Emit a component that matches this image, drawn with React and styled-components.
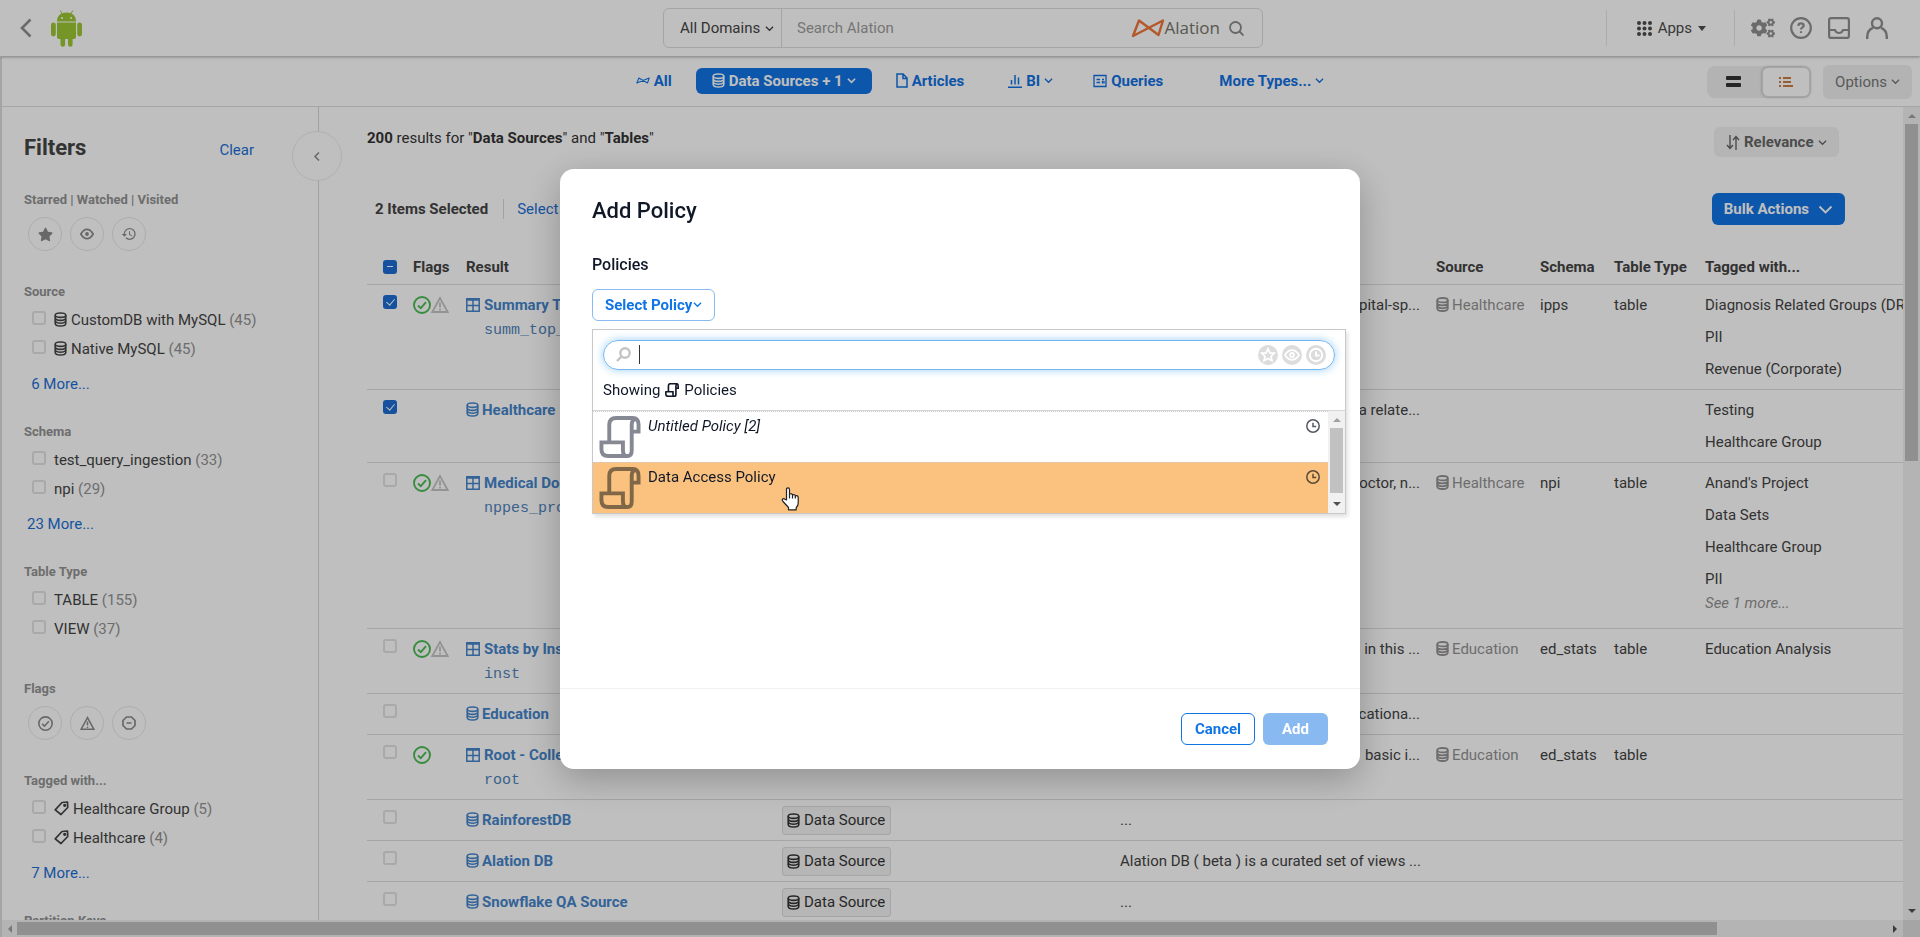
import React from 'react';
import styled, { createGlobalStyle, css } from 'styled-components';
import { FaCogs, FaStar } from 'react-icons/fa';
import { MdHistory } from 'react-icons/md';

const GlobalStyle = createGlobalStyle`
  * { box-sizing: border-box; }
  body {
    margin: 0;
    background: #fff;
    color: #444;
    font-family: Roboto, "Liberation Sans", sans-serif;
    font-size: 15px;
    line-height: 24px;
  }
  button, input, select { font: inherit; color: inherit; }
  button { cursor: pointer; padding: 0; border: 0; background: none; }
  a { text-decoration: none; }
  svg { display: block; flex: none; }
`;

/* ---------- icons ---------- */

const Icon = ({ w = 16, h = w, box, sw = 2, children, ...rest }) => (
  <svg width={w} height={h} viewBox={box || `0 0 ${w} ${h}`} fill="none" stroke="currentColor" strokeWidth={sw} aria-hidden="true" {...rest}>
    {children}
  </svg>
);

const ChevronDown = ({ size = 9, sw = 1.4 }) => (
  <Icon w={size} box="0 0 10 10" sw={sw}><path d="M1 3l4 4 4-4" /></Icon>
);

const DatabaseIcon = ({ sw = 1.6 }) => (
  <Icon w={13} h={15} sw={sw}>
    <ellipse cx="6.500" cy="3.200" rx="5.300" ry="2.200" />
    <path d="M1.200 3.200v8c0 1.600 2.200 2.800 5.300 2.800s5.300-1.200 5.300-2.800v-8M1.200 5.800c0 1.600 2.200 2.600 5.300 2.600s5.300-1 5.300-2.600M1.800 9.800c.8 1 2.500 1.500 4.700 1.500s3.900-.5 4.700-1.500" />
  </Icon>
);

const TableIcon = () => (
  <Icon w={14} sw={1.500}><path d="M.8.8h12.400v12.400H.8zM.8 2h12.400M.8 7.500h12.400M7 2v11" /></Icon>
);

const ScrollIcon = ({ size = 14 }) => (
  <Icon w={size} box="0 0 42 43" sw={size > 20 ? 4 : 5}>
    <path d="M10 27V9q0-7 7-7h17q6 0 6 7v7h-7M33 35V9q0-5 4-6M2 27h22v8q0 6 4.500 6t4.500-6M2 25v9q0 7 7 7h19" />
  </Icon>
);

const CheckCircle = ({ size = 18, sw = 1.9 }) => (
  <Icon w={size} box="0 0 18 18" sw={sw}><circle cx="9" cy="9" r="8" /><path d="M5 9.500l2.800 2.700L13 6.200" /></Icon>
);

const Warning = ({ size = 18, sw = 1.8 }) => (
  <Icon w={size} box="0 0 18 18" sw={sw}><path d="M9 2L1.300 16h15.400zM9 6.500v5M9 12.800v1.600" /></Icon>
);

const NoEntry = () => (
  <Icon w={14} sw={1.7}><path d="M4.500 1h5L13 4.500v5L9.500 13h-5L1 9.500v-5zM4.500 7h5" /></Icon>
);

const TagIcon = () => (
  <Icon w={15} sw={1.700}><path d="M8 1.500L13.500 1l.2 5.500L7 13.500 1.200 8.800z" strokeLinejoin="round" /><circle cx="10.700" cy="4.300" r=".8" fill="currentColor" /></Icon>
);

const EyeIcon = () => (
  <Icon w={14} sw={1.700}><path d="M.8 7Q3.500 2.300 7 2.300T13.200 7Q10.500 11.700 7 11.700T.8 7z" /><circle cx="7" cy="7" r="1.900" fill="currentColor" stroke="none" /></Icon>
);

const ClockIcon = () => (
  <Icon w={14} sw={1.500}><circle cx="7" cy="7" r="6.200" /><path d="M7 3.800V7.500h3.200" /></Icon>
);

const BowIcon = () => (
  <Icon w={14} h={9} box="0 0 34 20" sw={2.500}><path d="M7 4L2 16 32 4l-4 12z" strokeLinejoin="round" /></Icon>
);

const AndroidLogo = () => (
  <svg width="31" height="37" viewBox="0 0 31 37" fill="#9cc734" aria-hidden="true">
    <path d="M6 11.500C6 5.500 10 2.500 15.500 2.500S25 5.500 25 11.500z" />
    <path d="M9.200.5l2.300 4M21.800.5l-2.300 4" stroke="#9cc734" strokeWidth="1" />
    <circle cx="11" cy="8" r="1" fill="#fff" /><circle cx="20" cy="8" r="1" fill="#fff" />
    <path d="M6 12.500h19V27q0 2-2 2H8q-2 0-2-2z" />
    <rect x="0" y="12.500" width="4.800" height="14" rx="2.400" />
    <rect x="26.200" y="12.500" width="4.800" height="14" rx="2.400" />
    <path d="M9.500 28h4.600v6.500a2.300 2.300 0 0 1-4.600 0zM17 28h4.600v6.500a2.300 2.300 0 0 1-4.600 0z" />
  </svg>
);

const Triangle = ({ d, color = '#505050' }) => (
  <svg width="8" height="8" viewBox="0 0 8 8" fill={color} aria-hidden="true"><path d={d} /></svg>
);
const UP = 'M4 2l4 4H0z';
const DOWN = 'M0 2h8L4 6z';
const LEFT = 'M2 4l4-4v8z';
const RIGHT = 'M6 4L2 0v8z';

/* ---------- page frame ---------- */

const Page = styled.div`
  height: 100vh;
  display: flex;
  flex-direction: column;
  overflow: hidden;
`;

const Header = styled.header`
  position: relative;
  z-index: 1;
  flex: none;
  height: 56px;
  display: grid;
  grid-template-columns: 1fr 600px 1fr;
  align-items: center;
  padding: 0 14px 0 20px;
  margin-bottom: 1px;
  box-shadow: 0 1px 3px rgba(0, 0, 0, 0.35);
`;

const Brand = styled.div`
  display: flex;
  align-items: center;
  gap: 19px;
  color: #8f8f8f;
`;

const SearchBar = styled.div`
  display: flex;
  align-items: center;
  height: 40px;
  padding-right: 18px;
  border: 1px solid #dcdcdc;
  border-radius: 6px;
`;

const DomainPicker = styled.label`
  display: flex;
  align-items: center;
  gap: 4px;
  height: 100%;
  padding: 0 7px 0 16px;
  border-right: 1px solid #dcdcdc;
`;

const PlainSelect = styled.select`
  appearance: none;
  border: 0;
  padding: 0;
  background: none;
  font-weight: inherit;
`;

const SearchInput = styled.input`
  flex: 1;
  min-width: 0;
  border: 0;
  outline: 0;
  padding: 0 15px;
  background: none;
  &::placeholder { color: #9d9d9d; }
`;

const Wordmark = styled.span`
  margin: 0 9px 0 0;
  color: #77756a;
  font-family: "Open Sans", sans-serif;
  font-size: 17px;
`;

const Tools = styled.div`
  display: flex;
  justify-content: flex-end;
  align-items: center;
  height: 36px;
  padding-right: 17px;
  color: #8f8f8f;
`;

const AppsButton = styled.button`
  display: flex;
  align-items: center;
  gap: 6px;
  height: 36px;
  padding: 0 28px 0 30px;
  margin-right: 16px;
  border: solid #e6e6e6;
  border-width: 0 1px;
  color: #4c4c4c;
`;

const ToolButton = styled.button`
  display: flex;
  justify-content: center;
  width: 24px;
  margin-right: 14px;
  &:last-child { margin-right: 0; }
`;

const NavBar = styled.nav`
  flex: none;
  height: 50px;
  display: grid;
  grid-template-columns: 1fr auto 1fr;
  align-items: center;
  padding: 0 8px;
  border-bottom: 1px solid #dedede;
  border-left: 2px solid #dcdcdc;
`;

const Tabs = styled.div`
  grid-column: 2;
  display: flex;
  align-items: center;
  padding: 0 0 2px 38px;
`;

const Tab = styled.a`
  display: flex;
  align-items: center;
  gap: 4px;
  height: 26px;
  margin-right: ${(p) => p.$gap || 24}px;
  color: #1171e2;
  font-weight: 700;
  &:last-child { margin-right: 0; }
  ${(p) => p.$active && css`
    padding: 0 16px;
    border-radius: 6px;
    background: #1075e4;
    color: #fff;
  `}
`;

const NavTools = styled.div`
  grid-column: 3;
  display: flex;
  justify-content: flex-end;
  align-items: center;
  gap: 12px;
`;

const Toggle = styled.div`
  display: flex;
  align-items: center;
  padding: 1px;
  border-radius: 8px;
  background: #efefef;
`;

const ToggleButton = styled.button`
  display: flex;
  align-items: center;
  justify-content: center;
  width: ${(p) => (p.$active ? 48 : 54)}px;
  height: 30px;
  padding-right: ${(p) => (p.$active ? 0 : 4)}px;
  color: ${(p) => (p.$active ? '#cf7d40' : '#333')};
  ${(p) => p.$active && css`
    border: 1px solid #ddd;
    border-radius: 6px;
    background: #fff;
    box-shadow: 0 0 3px rgba(0, 0, 0, 0.3);
  `}
`;

const SoftButton = styled.button`
  display: flex;
  align-items: center;
  gap: 4px;
  height: 34px;
  padding: 0 12px;
  border-radius: 6px;
  background: #efefef;
  color: #777;
`;

const Body = styled.div`
  flex: 1;
  min-height: 0;
  display: flex;
  border-left: 2px solid #dcdcdc;
`;

/* ---------- filter column ---------- */

const SidebarWrap = styled.aside`
  position: relative;
  flex: none;
  width: 317px;
  border-right: 1px solid #d6d6d6;
`;

const Sidebar = styled.div`
  height: 100%;
  padding-left: 22px;
  overflow: hidden;
`;

const CollapseButton = styled.button`
  position: absolute;
  z-index: 1;
  top: 24px;
  right: -24px;
  width: 50px;
  height: 50px;
  display: flex;
  align-items: center;
  justify-content: center;
  border: 1px solid #ebebeb;
  border-radius: 50%;
  background: #fff;
  color: #888;
`;

const FilterHead = styled.div`
  display: flex;
  align-items: baseline;
  justify-content: space-between;
  height: 81px;
  padding: 29px 64px 0 0;
`;

const FilterTitle = styled.h2`
  margin: 0;
  font-size: 22px;
  font-weight: 700;
`;

const TextLink = styled.a`
  color: #1c6fd6;
`;

const FilterGroup = styled.section`
  margin-bottom: ${(p) => p.$gap || 24}px;
`;

const GroupLabel = styled.h3`
  margin: 0 0 1px;
  font-size: 13px;
  line-height: 24px;
  font-weight: 700;
  color: #929292;
`;

const RoundRow = styled.div`
  display: flex;
  gap: 8px;
  padding: 4px 0 0 4px;
`;

const RoundButton = styled.button`
  display: flex;
  align-items: center;
  justify-content: center;
  width: 34px;
  height: 34px;
  border: 1px solid #e8e8e8;
  border-radius: 50%;
  color: #8b8b8b;
`;

const FilterItem = styled.label`
  display: flex;
  align-items: center;
  gap: 4px;
  height: 29px;
  padding-left: 8px;
`;

const Count = styled.span`
  color: #929292;
`;

const MoreLink = styled.a`
  display: block;
  width: 73px;
  margin-top: 9px;
  text-align: center;
  color: #1c6fd6;
`;

const Check = styled.input.attrs({ type: 'checkbox' })`
  appearance: none;
  display: block;
  flex: none;
  position: relative;
  width: 14px;
  height: 14px;
  margin: 0 4px 4px 0;
  border: 2px solid #e0e2e0;
  border-radius: 3px;
  &:checked, &[data-mixed='true'] { border-color: #1c6cd4; background: #1c6cd4; }
  &:checked::after {
    content: '';
    position: absolute;
    left: 3px;
    top: 0;
    width: 4px;
    height: 7px;
    border: solid #fff;
    border-width: 0 1px 1px 0;
    transform: rotate(40deg);
  }
  &[data-mixed='true']::after {
    content: '';
    position: absolute;
    left: 2px;
    top: 4px;
    width: 6px;
    height: 1px;
    background: #fff;
  }
`;

/* ---------- results ---------- */

const Main = styled.main`
  flex: 1;
  min-width: 0;
  overflow: hidden;
  padding: 20px 0 0 48px;
`;

const SummaryRow = styled.div`
  display: flex;
  justify-content: space-between;
  height: 30px;
  margin-bottom: 36px;
  padding-right: 64px;
  line-height: 22px;
  color: #333;
`;

const SortPicker = styled.label`
  display: flex;
  align-items: center;
  gap: 4px;
  height: 30px;
  padding: 0 12px;
  border-radius: 6px;
  background: #f2f2f2;
  font-weight: 700;
  color: #666;
`;

const SelectionRow = styled.div`
  display: flex;
  align-items: center;
  height: 32px;
  margin-bottom: 25px;
  padding: 0 58px 0 8px;
`;

const SelectedCount = styled.strong`
  padding-right: 15px;
  margin-right: 13px;
  border-right: 1px solid #d8d8d8;
  line-height: 20px;
`;

const BulkButton = styled.button`
  display: flex;
  align-items: center;
  gap: 9px;
  height: 32px;
  margin-left: auto;
  padding: 0 12px;
  border-radius: 6px;
  background: #1075e4;
  color: #fff;
  font-weight: 700;
`;

const Table = styled.table`
  table-layout: fixed;
  width: 1820px;
  border-collapse: collapse;
`;

const Th = styled.th`
  height: 34px;
  padding: 0 8px;
  text-align: left;
  font-weight: 700;
`;

const Td = styled.td`
  padding: 4px 8px;
  border-top: 1px solid #dedede;
  vertical-align: top;
  white-space: nowrap;
  text-align: ${(p) => (p.$end ? 'right' : 'left')};
`;

const CheckCell = styled(Td)`
  padding: 10px 8px 0 16px;
`;

const CheckHolder = styled.div`
  padding: 4px 0 0 8px;
`;

const DescText = styled.div`
  line-height: 32px;
`;

const Line = styled.div`
  display: flex;
  align-items: center;
  gap: ${(p) => p.$gap || 0}px;
  height: 32px;
  color: ${(p) => p.$color || 'inherit'};
`;

const ResultLink = styled.a`
  display: flex;
  align-items: center;
  gap: ${(p) => (p.$table ? 4 : 3)}px;
  height: 32px;
  color: #4484ca;
  font-weight: 700;
`;

const Code = styled.code`
  display: block;
  margin: 1px 0 5px 18px;
  line-height: 18px;
  font-family: "Liberation Mono", monospace;
  font-size: 15px;
  color: #4f83bb;
`;

const SeeMore = styled.em`
  display: block;
  height: 29px;
  line-height: 16px;
  color: #929292;
`;

const TypeChip = styled.span`
  display: inline-flex;
  align-items: center;
  gap: 4px;
  height: 29px;
  margin-top: 2px;
  padding: 0 5px 0 4px;
  border: 1px solid #dcdcdc;
  border-radius: 3px;
  background: #f3f3f3;
  color: #333;
`;

const Green = styled.span`
  color: #4abb54;
`;

const Grey = styled.span`
  color: #c4c4c4;
`;

/* ---------- scroll bars ---------- */

const VBar = styled.div`
  flex: none;
  width: 17px;
  display: flex;
  flex-direction: column;
  align-items: center;
  justify-content: space-between;
  padding: 5px 0;
  background: #f1f1f1;
`;

const VThumb = styled.div`
  width: 13px;
  flex: 0 0 ${(p) => p.$size};
  margin-top: 4px;
  margin-bottom: auto;
  background: #c1c1c1;
`;

const HBar = styled.div`
  flex: none;
  display: flex;
  align-items: center;
  height: 17px;
  padding-left: 4px;
  border-left: 2px solid #dcdcdc;
  background: #f1f1f1;
`;

const HThumb = styled.div`
  flex: 0 0 calc(100% - 214px);
  height: 13px;
  margin: 0 auto 0 3px;
  background: #c1c1c1;
`;

const Corner = styled.div`
  width: 17px;
  height: 17px;
  margin-left: 4px;
  background: #dcdcdc;
`;

/* ---------- dialog ---------- */

const Overlay = styled.div`
  position: fixed;
  z-index: 2;
  inset: 0;
  display: flex;
  align-items: center;
  justify-content: center;
  background: rgba(0, 0, 0, 0.25);
`;

const Dialog = styled.section`
  display: flex;
  flex-direction: column;
  width: 800px;
  height: 600px;
  border-radius: 14px;
  background: #fff;
  box-shadow: 0 10px 36px rgba(0, 0, 0, 0.25);
  color: #101828;
`;

const DialogBody = styled.div`
  flex: 1;
  padding: 28px 32px 0;
`;

const DialogTitle = styled.h1`
  margin: 0 0 28px;
  font-size: 22px;
  line-height: 28px;
  font-weight: 500;
`;

const FieldTitle = styled.h2`
  margin: 0 0 12px;
  font-size: 16px;
  line-height: 24px;
  font-weight: 500;
`;

const Picker = styled.div`
  position: relative;
`;

const PickerButton = styled.button`
  display: flex;
  align-items: center;
  gap: 1px;
  height: 32px;
  padding: 0 12px;
  border: 1px solid #87bbf2;
  border-radius: 6px;
  color: #1075e4;
  font-weight: 700;
`;

const Menu = styled.div`
  position: absolute;
  top: 40px;
  left: 0;
  width: 754px;
  border: 1px solid #c8c8c8;
  background: #fff;
  box-shadow: 2px 3px 4px rgba(0, 0, 0, 0.12);
`;

const MenuSearch = styled.label`
  display: flex;
  align-items: center;
  height: 30px;
  margin: 10px 10px 8px;
  padding: 0 8px 0 12px;
  border: 1px solid #74b6f0;
  border-radius: 15px;
  box-shadow: 0 0 8px rgba(90, 175, 240, 0.6);
  color: #c4c4c4;
`;

const Caret = styled.span`
  width: 1px;
  height: 19px;
  margin-left: 8px;
  background: #333;
`;

const MenuInput = styled.input`
  flex: 1;
  min-width: 0;
  border: 0;
  outline: 0;
  padding: 0;
  background: none;
  color: #333;
`;

const Badges = styled.span`
  display: flex;
  gap: 4px;
`;

const Badge = styled.span`
  display: flex;
  align-items: center;
  justify-content: center;
  width: 20px;
  height: 20px;
  border-radius: 50%;
  background: #dcdcdc;
  color: #fff;
`;

const Showing = styled.div`
  display: flex;
  align-items: center;
  gap: 5px;
  height: 24px;
  margin: 0 10px 8px;
`;

const OptionsArea = styled.div`
  display: flex;
  border-top: 1px solid #d5d5d5;
`;

const OptionList = styled.ul`
  flex: 1;
  margin: 0;
  padding: 0;
  list-style: none;
`;

const Option = styled.li`
  position: relative;
  display: flex;
  align-items: flex-start;
  gap: 7px;
  height: 51px;
  padding: 4px 8px 0 6px;
  border-top: 1px dotted #ccc;
  background: ${(p) => (p.$hover ? '#fac27e' : '#fff')};
  color: ${(p) => (p.$hover ? '#806748' : '#868994')};
`;

const OptionName = styled.span`
  flex: 1;
  line-height: 20px;
  color: #101828;
  font-style: ${(p) => (p.$draft ? 'italic' : 'normal')};
`;

const OptionClock = styled.span`
  margin-top: 3px;
  color: ${(p) => (p.$hover ? '#5c4a38' : '#555965')};
`;

const Pointer = styled.svg`
  position: absolute;
  left: 188px;
  top: 24px;
`;

const DialogFooter = styled.footer`
  display: flex;
  justify-content: flex-end;
  gap: 8px;
  height: 81px;
  padding: 24px 32px 0;
  border-top: 1px solid #f0f1f3;
`;

const FooterButton = styled.button`
  height: 32px;
  padding: 0 ${(p) => (p.$primary ? 19 : 13)}px;
  border: ${(p) => (p.$primary ? '0' : '1px solid #1075e4')};
  border-radius: 6px;
  background: ${(p) => (p.$primary ? '#88baf1' : '#fff')};
  color: ${(p) => (p.$primary ? '#fff' : '#1075e4')};
  font-weight: 700;
`;

/* ---------- data ---------- */

const rows = [
  { on: true, flags: 2, name: 'Summary Top', code: 'summ_top_', desc: 'hospital-sp...', source: 'Healthcare', schema: 'ipps', tags: ['Diagnosis Related Groups (DRG)', 'PII', 'Revenue (Corporate)'] },
  { on: true, name: 'Healthcare', desc: 'data relate...', tags: ['Testing', 'Healthcare Group'] },
  { flags: 2, name: 'Medical Doctor', code: 'nppes_prov', desc: 'doctor, n...', source: 'Healthcare', schema: 'npi', tags: ["Anand's Project", 'Data Sets', 'Healthcare Group', 'PII'], more: 'See 1 more...' },
  { flags: 2, name: 'Stats by Inst', code: 'inst', desc: 'in this ...', source: 'Education', schema: 'ed_stats', tags: ['Education Analysis'] },
  { name: 'Education', desc: 'educationa...', tags: [] },
  { flags: 1, name: 'Root - Collect', code: 'root', desc: 'basic i...', source: 'Education', schema: 'ed_stats', tags: [] },
  { name: 'RainforestDB', type: true, desc: '...', tags: [] },
  { name: 'Alation DB', type: true, desc: 'Alation DB ( beta ) is a curated set of views ...', tags: [] },
  { name: 'Snowflake QA Source', type: true, desc: '...', tags: [] },
];

const columns = [38, 53, 316, 338, 316, 104, 74, 91];

const Item = ({ icon, name, count }) => (
  <FilterItem>
    <Check />
    {icon}
    <span>{name} <Count>({count})</Count></span>
  </FilterItem>
);

export default function App() {
  return (
    <>
      <GlobalStyle />
      <Page>
        <Header>
          <Brand>
            <button aria-label="Back"><Icon w={12} h={20} sw={2.600}><path d="M10.500 1.500L2 10l8.500 8.500" /></Icon></button>
            <AndroidLogo />
          </Brand>
          <SearchBar>
            <DomainPicker>
              <PlainSelect aria-label="Domain"><option>All Domains</option></PlainSelect>
              <ChevronDown />
            </DomainPicker>
            <SearchInput aria-label="Search" placeholder="Search Alation" />
            <Icon w={34} h={20} sw={2.400} stroke="#f0763a"><path d="M8 2.500L2 18 32 2.500 27.500 17z" strokeLinejoin="round" /></Icon>
            <Wordmark>Alation</Wordmark>
            <Icon w={15} sw={1.800} stroke="#8a8a8a"><circle cx="6.500" cy="6.500" r="5.500" /><path d="M10.500 10.500l4 4" /></Icon>
          </SearchBar>
          <Tools>
            <AppsButton>
              <svg width="15" height="15" viewBox="0 0 15 15" fill="currentColor" aria-hidden="true">
                {[2, 7.5, 13].map((y) => [2, 7.5, 13].map((x) => <circle key={`${x}-${y}`} cx={x} cy={y} r="2" />))}
              </svg>
              Apps
              <Triangle d="M0 2h8L4 7z" color="#4c4c4c" />
            </AppsButton>
            <ToolButton aria-label="Settings"><FaCogs size={24} /></ToolButton>
            <ToolButton aria-label="Help">
              <Icon w={22} sw={2.200}><circle cx="11" cy="11" r="9.800" /><path d="M8.300 8.800q.2-2.400 2.700-2.400t2.700 2.200q0 1.300-1.500 2-1.200.7-1.200 2M11 14.200v1.900" /></Icon>
            </ToolButton>
            <ToolButton aria-label="Inbox">
              <Icon w={22} sw={2.200}><rect x="1.100" y="1.100" width="19.800" height="19.800" rx="2" /><path d="M1 13h6q1 3 4 3t4-3h6" /></Icon>
            </ToolButton>
            <ToolButton aria-label="Account">
              <Icon w={22} sw={2.400}><circle cx="11" cy="6.300" r="5" /><path d="M1.200 22v-2q0-7 5.800-9.200M20.800 22v-2q0-7-5.800-9.200" /></Icon>
            </ToolButton>
          </Tools>
        </Header>

        <NavBar>
          <Tabs>
            <Tab href="#all"><BowIcon />All</Tab>
            <Tab href="#sources" $active><DatabaseIcon />Data Sources + 1<ChevronDown sw={1.800} /></Tab>
            <Tab href="#articles" $gap={44}>
              <Icon w={12} h={15} sw={1.500}><path d="M1 1h6l4 4v9H1zM7 1v4.500h4" /></Icon>Articles
            </Tab>
            <Tab href="#bi" $gap={40}>
              <Icon w={14} sw={1.500}><path d="M0 13.200h14M3.500 10.500V6M7 10.500V1M10.500 10.500V3.500" /></Icon>BI<ChevronDown />
            </Tab>
            <Tab href="#queries" $gap={56}>
              <Icon w={14} sw={1.300}><path d="M1 1.500h12v11H1zM3.500 5.500h3.500M3.500 8.500h3.500M9 5.500h2M9.500 7v2.500M11 7v2.500" /></Icon>Queries
            </Tab>
            <Tab href="#more">More Types...<ChevronDown /></Tab>
          </Tabs>
          <NavTools>
            <Toggle>
              <ToggleButton aria-label="Card view">
                <svg width="15" height="12" viewBox="0 0 15 12" fill="currentColor"><rect width="15" height="4" rx="1" /><rect y="7" width="15" height="4" rx="1" /></svg>
              </ToggleButton>
              <ToggleButton $active aria-label="List view">
                <Icon w={14} h={10} sw={1.800}><path d="M0 1h2M4 1h8M0 5h2M4 5h8M0 9h2M4 9h10" /></Icon>
              </ToggleButton>
            </Toggle>
            <SoftButton>Options<ChevronDown /></SoftButton>
          </NavTools>
        </NavBar>

        <Body>
          <SidebarWrap>
            <CollapseButton aria-label="Collapse filters"><Icon w={6} h={9} sw={1.500}><path d="M5 .5l-4 4 4 4" /></Icon></CollapseButton>
            <Sidebar>
              <FilterHead>
                <FilterTitle>Filters</FilterTitle>
                <TextLink href="#clear">Clear</TextLink>
              </FilterHead>
              <FilterGroup $gap={29}>
                <GroupLabel>Starred | Watched | Visited</GroupLabel>
                <RoundRow>
                  <RoundButton aria-label="Starred"><FaStar size={15} /></RoundButton>
                  <RoundButton aria-label="Watched"><EyeIcon /></RoundButton>
                  <RoundButton aria-label="Visited"><MdHistory size={16} /></RoundButton>
                </RoundRow>
              </FilterGroup>
              <FilterGroup>
                <GroupLabel>Source</GroupLabel>
                <Item icon={<DatabaseIcon />} name="CustomDB with MySQL" count={45} />
                <Item icon={<DatabaseIcon />} name="Native MySQL" count={45} />
                <MoreLink href="#more-sources">6 More...</MoreLink>
              </FilterGroup>
              <FilterGroup>
                <GroupLabel>Schema</GroupLabel>
                <Item name="test_query_ingestion" count={33} />
                <Item name="npi" count={29} />
                <MoreLink href="#more-schemas">23 More...</MoreLink>
              </FilterGroup>
              <FilterGroup $gap={34}>
                <GroupLabel>Table Type</GroupLabel>
                <Item name="TABLE" count={155} />
                <Item name="VIEW" count={37} />
              </FilterGroup>
              <FilterGroup $gap={29}>
                <GroupLabel>Flags</GroupLabel>
                <RoundRow>
                  <RoundButton aria-label="Endorsed"><CheckCircle size={15} /></RoundButton>
                  <RoundButton aria-label="Warned"><Warning size={15} /></RoundButton>
                  <RoundButton aria-label="Deprecated"><NoEntry /></RoundButton>
                </RoundRow>
              </FilterGroup>
              <FilterGroup>
                <GroupLabel>Tagged with...</GroupLabel>
                <Item icon={<TagIcon />} name="Healthcare Group" count={5} />
                <Item icon={<TagIcon />} name="Healthcare" count={4} />
                <MoreLink href="#more-tags">7 More...</MoreLink>
              </FilterGroup>
              <FilterGroup><GroupLabel>Partition Keys</GroupLabel></FilterGroup>
            </Sidebar>
          </SidebarWrap>

          <Main>
            <SummaryRow>
              <span><strong>200</strong> results for "<strong>Data Sources</strong>" and "<strong>Tables</strong>"</span>
              <SortPicker>
                <Icon w={14} h={15} sw={1.400}><path d="M4 0v13M1 10l3 3.500L7 10M10 15V2M7 5l3-3.500L13 5" /></Icon>
                <PlainSelect aria-label="Sort by"><option>Relevance</option></PlainSelect>
                <ChevronDown />
              </SortPicker>
            </SummaryRow>
            <SelectionRow>
              <SelectedCount>2 Items Selected</SelectedCount>
              <TextLink href="#select-all">Select All</TextLink>
              <BulkButton>Bulk Actions<ChevronDown size={15} sw={1.200} /></BulkButton>
            </SelectionRow>
            <Table>
              <colgroup>
                {columns.map((w, i) => <col key={i} width={w} />)}
                <col />
              </colgroup>
              <thead>
                <tr>
                  <Th scope="col" aria-label="Select"><CheckHolder><Check data-mixed="true" aria-label="Select all rows" /></CheckHolder></Th>
                  <Th scope="col">Flags</Th>
                  <Th scope="col">Result</Th>
                  <Th scope="col">Type</Th>
                  <Th scope="col">Description</Th>
                  <Th scope="col">Source</Th>
                  <Th scope="col">Schema</Th>
                  <Th scope="col">Table Type</Th>
                  <Th scope="col">Tagged with...</Th>
                </tr>
              </thead>
              <tbody>
                {rows.map((r) => (
                  <tr key={r.name}>
                    <CheckCell><Check defaultChecked={r.on} aria-label={`Select ${r.name}`} /></CheckCell>
                    <Td>
                      <Line>
                        {r.flags > 0 && <Green><CheckCircle /></Green>}
                        {r.flags > 1 && <Grey><Warning /></Grey>}
                      </Line>
                    </Td>
                    <Td>
                      <ResultLink href="#result" $table={!!r.code}>{r.code ? <TableIcon /> : <DatabaseIcon />}{r.name}</ResultLink>
                      {r.code && <Code>{r.code}</Code>}
                    </Td>
                    <Td>{r.type && <TypeChip><DatabaseIcon />Data Source</TypeChip>}</Td>
                    <Td $end={!r.type}><DescText>{r.desc}</DescText></Td>
                    <Td>{r.source && <Line $gap={3} $color="#929292"><DatabaseIcon sw={1.800} />{r.source}</Line>}</Td>
                    <Td>{r.schema && <Line>{r.schema}</Line>}</Td>
                    <Td>{r.schema && <Line>table</Line>}</Td>
                    <Td>
                      {r.tags.map((t) => <Line key={t}>{t}</Line>)}
                      {r.more && <SeeMore>{r.more}</SeeMore>}
                    </Td>
                  </tr>
                ))}
              </tbody>
            </Table>
          </Main>
          <VBar>
            <Triangle d={UP} color="#a0a0a0" />
            <VThumb $size="337px" />
            <Triangle d={DOWN} />
          </VBar>
        </Body>
        <HBar>
          <Triangle d={LEFT} color="#a0a0a0" />
          <HThumb />
          <Triangle d={RIGHT} />
          <Corner />
        </HBar>
      </Page>

      <Overlay>
        <Dialog role="dialog" aria-labelledby="dialog-title">
          <DialogBody>
            <DialogTitle id="dialog-title">Add Policy</DialogTitle>
            <FieldTitle>Policies</FieldTitle>
            <Picker>
              <PickerButton>Select Policy<ChevronDown /></PickerButton>
              <Menu>
                <MenuSearch>
                  <Icon w={15} sw={2.400}><circle cx="9" cy="6" r="4.700" /><path d="M5.500 9.500L1 14" /></Icon>
                  <Caret />
                  <MenuInput aria-label="Search policies" />
                  <Badges>
                    <Badge><Icon w={16} sw={1.800}><path d="M8 1.800l1.900 4 4.300.5-3.200 3 .9 4.300L8 11.500l-3.900 2.100.9-4.300-3.200-3 4.300-.5z" /></Icon></Badge>
                    <Badge><Icon w={16} sw={1.800}><path d="M1 8q3-4.800 7-4.800T15 8q-3 4.800-7 4.800T1 8z" /><circle cx="8" cy="8" r="2" /></Icon></Badge>
                    <Badge><Icon w={16} sw={1.900}><circle cx="8" cy="8" r="6.200" /><path d="M8 4.500V8.500h3.500" /></Icon></Badge>
                  </Badges>
                </MenuSearch>
                <Showing>Showing <ScrollIcon /> Policies</Showing>
                <OptionsArea>
                  <OptionList>
                    <Option>
                      <ScrollIcon size={42} />
                      <OptionName $draft>Untitled Policy [2]</OptionName>
                      <OptionClock><ClockIcon /></OptionClock>
                    </Option>
                    <Option $hover>
                      <ScrollIcon size={42} />
                      <OptionName>Data Access Policy</OptionName>
                      <OptionClock $hover><ClockIcon /></OptionClock>
                      <Pointer width="19" height="24" viewBox="0 0 19 24" fill="#fff" stroke="#222" strokeWidth="1.200" strokeLinejoin="round">
                        <path d="M5.500 13V2.500q0-1.700 1.500-1.700t1.500 1.700V7q2.500-.8 3 .8 2.500-.6 2.800 1 2.700-.5 2.900 1.400V16q0 3-2 4.500v2.300H7.500V20.500L2 14.500q-1.300-1.700-.3-2.500t2.300.3z" />
                        <path d="M8.500 7v4.500M11.500 8v3.500M14.300 9v2.500" fill="none" />
                      </Pointer>
                    </Option>
                  </OptionList>
                  <VBar>
                    <Triangle d={UP} color="#a0a0a0" />
                    <VThumb $size="65px" />
                    <Triangle d={DOWN} />
                  </VBar>
                </OptionsArea>
              </Menu>
            </Picker>
          </DialogBody>
          <DialogFooter>
            <FooterButton>Cancel</FooterButton>
            <FooterButton $primary>Add</FooterButton>
          </DialogFooter>
        </Dialog>
      </Overlay>
    </>
  );
}
